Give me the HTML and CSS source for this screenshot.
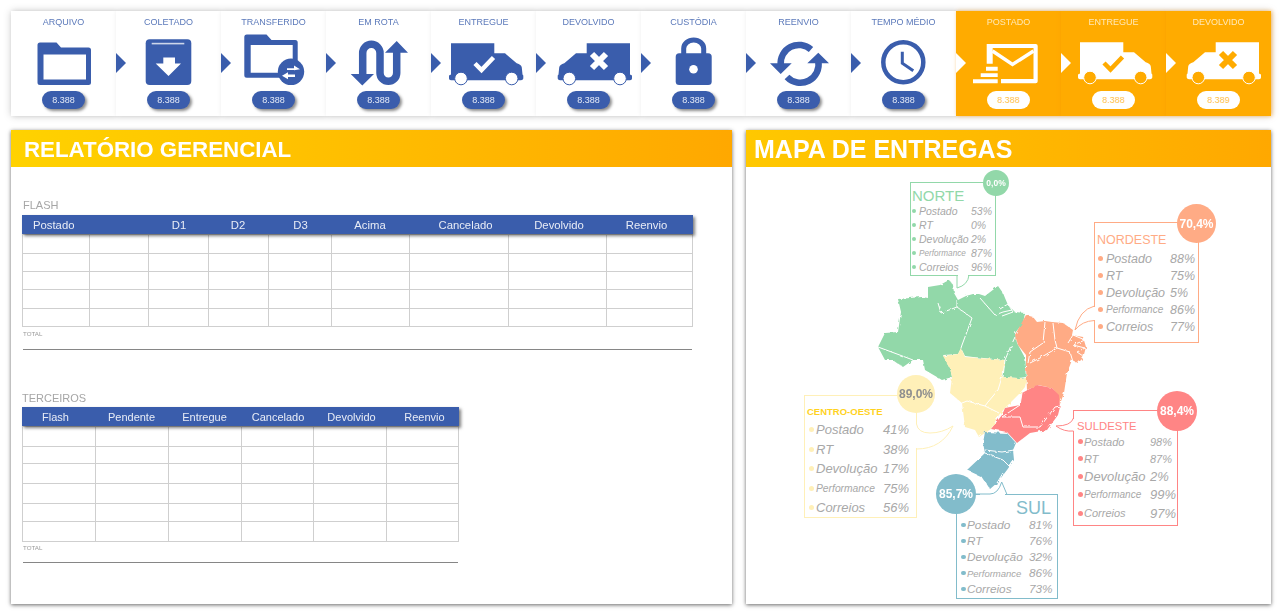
FILE: index.html
```html
<!DOCTYPE html>
<html lang="pt">
<head>
<meta charset="utf-8">
<title>Relatório Gerencial</title>
<link rel="stylesheet" href="styles.css">
</head>
<body>
<svg class="defs" width="0" height="0" aria-hidden="true">
  <symbol id="truck" viewBox="0 0 105 57">
    <path class="fg" d="M20 9.3H63.3V19.3H74L85.7 29.3Q90.3 30.6 90.8 33.5L91.5 40.5 92.3 41.5V44.5Q92 46.2 90 46.2H20Q18 46.2 18 44.5V41.5L20 40.5Z"/>
    <circle class="wheel" cx="30" cy="44.5" r="6.3"/>
    <circle class="wheel" cx="80.7" cy="44.5" r="6.3"/>
  </symbol>
  <filter id="rugged" x="-5%" y="-5%" width="110%" height="110%">
    <feTurbulence type="fractalNoise" baseFrequency=".22" numOctaves="2" seed="4" result="n"/>
    <feDisplacementMap in="SourceGraphic" in2="n" scale="3.2"/>
  </filter>
</svg>

<section class="strip">
  <div class="cell">
    <span class="cell-label">ARQUIVO</span>
    <svg class="icon" viewBox="0 0 105 57"><path class="fg" fill-rule="evenodd" d="M29 8.5H45.5L50 13.5H77.5A2.5 2.5 0 0 1 80 16V48.5A2.5 2.5 0 0 1 77.5 51H29A2.5 2.5 0 0 1 26.5 48.5V11A2.5 2.5 0 0 1 29 8.5ZM32.5 20.5V45.5H75V20.5Z"/></svg>
    <span class="pill">8.388</span>
  </div>
  <div class="cell arrowed">
    <span class="cell-label">COLETADO</span>
    <svg class="icon" viewBox="0 0 105 57"><rect class="fg" x="29.7" y="5.3" width="45.6" height="45.7" rx="4"/><rect class="bg soft" x="35.7" y="8.8" width="32.6" height="1.6"/><path class="bg" d="M47.3 23.5H59V29.5H65L52.5 42 39.7 29.5H47.3Z"/></svg>
    <span class="pill">8.388</span>
  </div>
  <div class="cell arrowed">
    <span class="cell-label">TRANSFERIDO</span>
    <svg class="icon" viewBox="0 0 105 57"><path class="fg" fill-rule="evenodd" d="M25.8 .5H45.5L50.5 6H74.2A2.5 2.5 0 0 1 76.7 8.5V41.2A2.5 2.5 0 0 1 74.2 43.7H25.8A2.5 2.5 0 0 1 23.3 41.2V3A2.5 2.5 0 0 1 25.8 .5ZM29.7 11V38.7H71.7V11Z"/><circle class="fg" cx="70" cy="37.8" r="13.2"/><path class="bg" d="M66 34.2H73V31.5L79 35.3 73 36.3V36H66ZM74 40.5H67V38.3L61 41.8 67 45.3V43H74Z"/></svg>
    <span class="pill">8.388</span>
  </div>
  <div class="cell arrowed">
    <span class="cell-label">EM ROTA</span>
    <svg class="icon" viewBox="0 0 105 57"><path class="line-fg thick" d="M36.7 42V19A8.65 8.65 0 0 1 54 19V39A8.35 8.35 0 0 0 70.7 39V17"/><path class="fg" d="M24.7 40H48L36.3 51.5ZM59 18.7H82L70.7 7Z"/></svg>
    <span class="pill">8.388</span>
  </div>
  <div class="cell arrowed">
    <span class="cell-label">ENTREGUE</span>
    <svg class="icon" viewBox="0 0 105 57"><use href="#truck"/><path class="line-bg mark" d="M44 29.5 50.5 36 62.5 23.5"/></svg>
    <span class="pill">8.388</span>
  </div>
  <div class="cell arrowed">
    <span class="cell-label">DEVOLVIDO</span>
    <svg class="icon" viewBox="0 0 105 57"><use href="#truck" transform="matrix(-1 0 0 1 114 0)"/><path class="line-bg cross" d="M56 20 70 34M70 20 56 34"/></svg>
    <span class="pill">8.388</span>
  </div>
  <div class="cell arrowed">
    <span class="cell-label">CUSTÓDIA</span>
    <svg class="icon" viewBox="0 0 105 57"><path class="line-fg shackle" d="M42.7 22V14.5A10 8.5 0 0 1 62.7 14.5V22"/><rect class="fg" x="34.7" y="19.3" width="36" height="31.7" rx="3.5"/><circle class="bg" cx="52.5" cy="35.3" r="4.3"/></svg>
    <span class="pill">8.388</span>
  </div>
  <div class="cell arrowed">
    <span class="cell-label">REENVIO</span>
    <svg class="icon" viewBox="0 0 105 57"><path class="line-fg arc" d="M65 15.5A18.3 18.3 0 0 0 34.7 31M41 43A18.3 18.3 0 0 0 72.3 27"/><path class="fg" d="M24 29.3H45.7L34.7 40ZM61.3 29.3H83L72.3 18.7Z"/></svg>
    <span class="pill">8.388</span>
  </div>
  <div class="cell arrowed">
    <span class="cell-label">TEMPO MÉDIO</span>
    <svg class="icon" viewBox="0 0 105 57"><circle class="line-fg ring" cx="52.3" cy="28.3" r="20"/><path class="line-fg hands" d="M51.3 17.7V29.3L62.3 36.7"/></svg>
    <span class="pill">8.388</span>
  </div>
  <div class="cell arrowed alt">
    <span class="cell-label">POSTADO</span>
    <svg class="icon" viewBox="0 0 105 57"><path class="fg" fill-rule="evenodd" d="M30.7 10H79.7A2 2 0 0 1 81.7 12V47.3A2 2 0 0 1 79.7 49.3H45V45H77.5V14H36.7V29.7H30.7Z"/><path class="line-fg flap" d="M36.5 17 56.5 30.5 77.5 17"/><path class="fg" d="M30 32.7H41.7V36.7H30ZM24.7 39.3H41.7V43H24.7ZM17 45.3H41.7V49.3H17Z"/></svg>
    <span class="pill">8.388</span>
  </div>
  <div class="cell arrowed alt">
    <span class="cell-label">ENTREGUE</span>
    <svg class="icon" viewBox="0 0 105 57"><use href="#truck" transform="translate(-1 -1)"/><path class="line-bg mark" d="M43 29 49.5 35.5 61.5 23"/></svg>
    <span class="pill">8.388</span>
  </div>
  <div class="cell arrowed alt">
    <span class="cell-label">DEVOLVIDO</span>
    <svg class="icon" viewBox="0 0 105 57"><use href="#truck" transform="matrix(-1 0 0 1 113 -1)"/><path class="line-bg cross" d="M55 19 69 33M69 19 55 33"/></svg>
    <span class="pill">8.389</span>
  </div>
</section>

<main class="panels">
  <section class="panel report">
    <h2 class="panel-title">RELATÓRIO GERENCIAL</h2>
    <div class="report-body">
      <div class="block block-flash">
        <h3 class="block-label">FLASH</h3>
        <div class="thead thead-flash">
          <span class="th th-first">Postado</span><span class="th"></span><span class="th th-r1">D1</span><span class="th">D2</span><span class="th th-r1">D3</span><span class="th">Acima</span><span class="th th-cancel">Cancelado</span><span class="th th-devol">Devolvido</span><span class="th th-reenv">Reenvio</span>
        </div>
        <table class="grid grid-flash">
          <colgroup><col class="f1"><col class="f2"><col class="f3"><col class="f3"><col class="f4"><col class="f5"><col class="f6"><col class="f7"><col class="f8"></colgroup>
          <tbody>
            <tr class="r19"><td></td><td></td><td></td><td></td><td></td><td></td><td></td><td></td><td></td></tr>
            <tr class="r18"><td></td><td></td><td></td><td></td><td></td><td></td><td></td><td></td><td></td></tr>
            <tr class="r18"><td></td><td></td><td></td><td></td><td></td><td></td><td></td><td></td><td></td></tr>
            <tr class="r19"><td></td><td></td><td></td><td></td><td></td><td></td><td></td><td></td><td></td></tr>
            <tr class="r18"><td></td><td></td><td></td><td></td><td></td><td></td><td></td><td></td><td></td></tr>
          </tbody>
        </table>
        <p class="total">TOTAL</p>
        <div class="total-line line-flash"></div>
      </div>
      <div class="block block-third">
        <h3 class="block-label">TERCEIROS</h3>
        <div class="thead thead-third">
          <span class="th th-flash">Flash</span><span class="th">Pendente</span><span class="th">Entregue</span><span class="th th-r1">Cancelado</span><span class="th th-r2">Devolvido</span><span class="th th-r2">Reenvio</span>
        </div>
        <table class="grid grid-third">
          <colgroup><col class="t1"><col class="t1"><col class="t1"><col class="t2"><col class="t1"><col class="t3"></colgroup>
          <tbody>
            <tr class="r20"><td></td><td></td><td></td><td></td><td></td><td></td></tr>
            <tr class="r17"><td></td><td></td><td></td><td></td><td></td><td></td></tr>
            <tr class="r20"><td></td><td></td><td></td><td></td><td></td><td></td></tr>
            <tr class="r20"><td></td><td></td><td></td><td></td><td></td><td></td></tr>
            <tr class="r18"><td></td><td></td><td></td><td></td><td></td><td></td></tr>
            <tr class="r20"><td></td><td></td><td></td><td></td><td></td><td></td></tr>
          </tbody>
        </table>
        <p class="total">TOTAL</p>
        <div class="total-line line-third"></div>
      </div>
    </div>
  </section>

  <section class="panel map-panel">
    <h2 class="panel-title">MAPA DE ENTREGAS</h2>
    <div class="map-canvas">
      <svg class="map-layer" viewBox="746 167 525 437" aria-hidden="true">
        <g class="region">
          <path class="r-green" d="M898 299 910 298 922 297 928 298 928 287 940 285 949 280 953 285 954 293 958 300 966 296 973 294 979 294 985 296 998 286 1003 293 1005 298 1008 305 1015 312 1025 313 1023 323 1015 333 1017 343 1024 356 1026 377 1018 378 1003 377 1005 360 973 357 965 356 961 348 958 354 943 355 933 352 923 360 925 370 942 380 952 377 950 368 943 355 933 352 923 360 913 360 903 367 893 360 885 360 878 347 885 333 898 332 901 312Z"/>
          <path class="r-orange" d="M1015 335 1026 315 1033 317 1037 322 1045 321 1052 322 1063 323 1073 330 1072 335 1083 337 1086 347 1083 358 1078 363 1072 360 1067 373 1064 393 1060 404 1058 395 1052 388 1038 385 1027 390 1026 367 1026 355 1018 345Z"/>
          <path class="r-cream" d="M943 356 958 354 961 348 965 357 1005 360 1003 377 1017 378 1027 378 1025 387 1020 393 1005 408 999 415 991 429 979 437 975 430 965 427 962 403 950 393 952 377 950 368Z"/>
          <path class="r-red" d="M1037 385 1052 388 1059 395 1060 407 1058 415 1047 430 1030 433 1017 443 1007 432 991 429 1002 415 1005 408 1020 405 1022 393Z"/>
          <path class="r-blue" d="M985 432 1007 433 1016 443 1013 450 1014 460 1007 470 997 483 990 489 982 477 967 470 985 453 983 443Z"/>
        </g>
        <g class="borders">
          <path d="M878 347 897 354 913 360"/>
          <path d="M938 303 941 313 957 307 972 318 962 345 961 348"/>
          <path d="M957 307 957 300"/>
          <path d="M980 298 995 315 1003 312 1012 310"/>
          <path d="M1000 309 1008 304 1013 312 1002 316"/>
          <path d="M1015 337 1010 348 1005 360 1003 377"/>
          <path d="M1053 323 1055 340 1057 348"/>
          <path d="M1045 322 1043 343 1030 352 1028 363"/>
          <path d="M1030 363 1040 358 1057 348 1070 352 1073 362 1070 369"/>
          <path d="M1068 343 1073 335 1085 340 1073 345 1085 348 1077 352 1083 356"/>
          <path d="M1002 377 998 390 988 402 985 406 967 401 962 403"/>
          <path d="M985 406 999 413"/>
          <path d="M1022 393 1020 405 1002 417 1020 417 1023 427 1040 427 1055 407 1060 406"/>
          <path d="M985 450 1002 452 1014 450"/>
          <path d="M985 453 1003 460 1013 470"/>
          <path d="M1003 473 997 483"/>
        </g>
      </svg>

      <div class="callout co-norte">
        <h4 class="co-title">NORTE</h4>
        <ul class="co-rows">
          <li class="row"><span class="lab">Postado</span><span class="val">53%</span></li>
          <li class="row"><span class="lab">RT</span><span class="val">0%</span></li>
          <li class="row"><span class="lab">Devolução</span><span class="val">2%</span></li>
          <li class="row"><span class="lab small">Performance</span><span class="val">87%</span></li>
          <li class="row"><span class="lab">Correios</span><span class="val">96%</span></li>
        </ul>
      </div>
      <div class="callout co-nordeste">
        <h4 class="co-title">NORDESTE</h4>
        <ul class="co-rows">
          <li class="row"><span class="lab">Postado</span><span class="val">88%</span></li>
          <li class="row"><span class="lab">RT</span><span class="val">75%</span></li>
          <li class="row"><span class="lab">Devolução</span><span class="val">5%</span></li>
          <li class="row"><span class="lab small">Performance</span><span class="val">86%</span></li>
          <li class="row"><span class="lab">Correios</span><span class="val">77%</span></li>
        </ul>
      </div>
      <div class="callout co-centro">
        <h4 class="co-title">CENTRO-OESTE</h4>
        <ul class="co-rows">
          <li class="row"><span class="lab">Postado</span><span class="val">41%</span></li>
          <li class="row"><span class="lab">RT</span><span class="val">38%</span></li>
          <li class="row"><span class="lab">Devolução</span><span class="val">17%</span></li>
          <li class="row"><span class="lab small">Performance</span><span class="val">75%</span></li>
          <li class="row"><span class="lab">Correios</span><span class="val">56%</span></li>
        </ul>
      </div>
      <div class="callout co-sudeste">
        <h4 class="co-title">SULDESTE</h4>
        <ul class="co-rows">
          <li class="row"><span class="lab">Postado</span><span class="val">98%</span></li>
          <li class="row"><span class="lab">RT</span><span class="val">87%</span></li>
          <li class="row big"><span class="lab">Devolução</span><span class="val">2%</span></li>
          <li class="row"><span class="lab small">Performance</span><span class="val big-val">99%</span></li>
          <li class="row"><span class="lab">Correios</span><span class="val big-val">97%</span></li>
        </ul>
      </div>
      <div class="callout co-sul">
        <h4 class="co-title">SUL</h4>
        <ul class="co-rows">
          <li class="row"><span class="lab">Postado</span><span class="val">81%</span></li>
          <li class="row"><span class="lab">RT</span><span class="val">76%</span></li>
          <li class="row"><span class="lab">Devolução</span><span class="val">32%</span></li>
          <li class="row"><span class="lab small">Performance</span><span class="val">86%</span></li>
          <li class="row"><span class="lab">Correios</span><span class="val">73%</span></li>
        </ul>
      </div>

      <svg class="map-layer" viewBox="746 167 525 437" aria-hidden="true">
        <g class="tail t-green"><path class="gap" d="M958 274H968V277H958Z"/><path d="M957 275V288Q968 285 969 275"/></g>
        <g class="tail t-orange"><path class="gap" d="M1093 307H1096V320H1093Z"/><path d="M1094.5 306Q1079 310 1075 330 1082 321 1094.5 320.5"/></g>
        <g class="tail t-cream"><path class="gap" d="M916 414H918V448H916Z"/><path d="M916.5 413V424Q918 433 930 433 942 433 953 426 942 449 916.5 449"/></g>
        <g class="tail t-red"><path class="gap" d="M1072 419H1075V431H1072Z"/><path d="M1073.5 418Q1071 426 1056 426 1064 432 1073.5 431"/></g>
        <g class="tail t-blue"><path class="gap" d="M980 493H1005V496H980Z"/><path d="M976 494H990Q998 494 1001.7 482L1007 494.5"/></g>
      </svg>

      <span class="badge b-norte">0,0%</span>
      <span class="badge b-nordeste">70,4%</span>
      <span class="badge b-centro">89,0%</span>
      <span class="badge b-sudeste">88,4%</span>
      <span class="badge b-sul">85,7%</span>
    </div>
  </section>
</main>
</body>
</html>
```

FILE: styles.css
```css
:root {
  --blue: #3a5dac;
  --amber: #ffab00;
  --font: "Liberation Sans", Arial, Helvetica, sans-serif;
}
* { box-sizing: border-box; }
html, body { height: 100%; }
body {
  margin: 0;
  padding: 11px 9px 0 11px;
  background: #fff;
  font-family: var(--font);
  overflow: hidden;
}
.defs { position: absolute; }

/* top strip */
.strip {
  display: flex;
  height: 105px;
  box-shadow: 0 0 8px rgba(0, 0, 0, .18);
  filter: blur(.35px);
}
.cell {
  --fg: var(--blue);
  --bg: #fff;
  position: relative;
  flex: 0 0 105px;
  display: flex;
  flex-direction: column;
  align-items: center;
  padding-top: 6px;
  background: #fff;
  box-shadow: 1px 0 5px rgba(0, 0, 0, .1);
}
.cell.alt {
  --fg: #fff;
  --bg: var(--amber);
  background: var(--amber);
  box-shadow: 1px 0 4px rgba(240, 140, 0, .55);
}
.arrowed::before {
  content: "";
  position: absolute;
  left: 0;
  top: 42px;
  border-left: 10px solid var(--fg);
  border-top: 10px solid transparent;
  border-bottom: 10px solid transparent;
}
.cell-label {
  height: 11px;
  line-height: 11px;
  font-size: 9px;
  color: #5b79ba;
  white-space: nowrap;
}
.alt .cell-label { color: #ffe9b8; }
.icon {
  display: block;
  width: 105px;
  height: 57px;
  margin-top: 6px;
}
.fg { fill: var(--fg); }
.bg { fill: var(--bg); }
.soft { opacity: .75; }
.wheel { fill: var(--bg); stroke: var(--fg); stroke-width: 1; }
.line-fg { fill: none; stroke: var(--fg); }
.line-bg { fill: none; stroke: var(--bg); }
.thick { stroke-width: 7.5; }
.mark { stroke-width: 4.5; }
.cross { stroke-width: 6; }
.shackle { stroke-width: 5; }
.arc { stroke-width: 6.5; }
.ring { stroke-width: 4.5; }
.hands { stroke-width: 3; }
.flap { stroke-width: 3.5; }
.pill {
  width: 43px;
  height: 18px;
  line-height: 18px;
  border-radius: 9px;
  text-align: center;
  font-size: 9px;
  color: #e6ebf7;
  background: var(--blue);
  box-shadow: 2px 2px 3px rgba(0, 0, 0, .45);
}
.alt .pill {
  color: #ffc24d;
  background: #fff;
  box-shadow: none;
}

/* panels */
.panels {
  display: flex;
  gap: 14px;
  margin-top: 14px;
  height: 474px;
  filter: blur(.35px);
}
.panel {
  background: #fff;
  box-shadow: 0 1px 4px rgba(0, 0, 0, .6);
}
.report { flex: 0 0 721px; }
.map-panel { flex: 0 0 525px; }
.panel-title {
  margin: 0;
  height: 37px;
  line-height: 39px;
  font-size: 22.3px;
  font-weight: 700;
  color: #fff;
  background: linear-gradient(90deg, #ffd200 0%, #ffa800 100%);
}
.report .panel-title { padding-left: 13px; }
.map-panel .panel-title {
  padding-left: 8px;
  font-size: 25px;
  line-height: 38px;
  background: linear-gradient(90deg, #ffc800 0%, #ffa800 100%);
}

.report-body { padding: 32px 0 0 11px; }
.block-label {
  margin: 0 0 3px 1px;
  height: 13px;
  line-height: 13px;
  font-size: 11px;
  font-weight: 400;
  color: #a6a6a6;
}
.block-third { margin-top: 42px; }
.block-third .block-label { margin: 0 0 2px; }
.thead {
  display: grid;
  height: 19px;
  align-items: center;
  background: var(--blue);
  box-shadow: 2px 2px 3px rgba(0, 0, 0, .5);
  position: relative;
}
.thead-flash {
  width: 671px;
  grid-template-columns: 67px 59px 60px 60px 63px 78px 99px 98px 87px;
}
.thead-flash .th { font-size: 11.3px; }
.thead-third {
  width: 437px;
  grid-template-columns: 73px 73px 73px 72px 73px 73px;
}
.th {
  text-align: center;
  font-size: 11px;
  color: #e8ecf6;
  white-space: nowrap;
}
.th-first { text-align: left; padding-left: 11px; }
.th-r1 { padding-left: 2px; }
.th-r2 { padding-left: 4px; }
.th-flash { padding-right: 6px; }
.th-cancel { padding-left: 14px; }
.th-devol { padding-left: 4px; }
.th-reenv { padding-right: 6px; }
.grid {
  border-collapse: collapse;
  table-layout: fixed;
}
.grid td { border: 1px solid #cfcfcf; padding: 0; }
.grid-flash { width: 670px; }
.grid-third { width: 436px; }
.f1 { width: 67px; } .f2 { width: 59px; } .f3 { width: 60px; } .f4 { width: 63px; }
.f5 { width: 78px; } .f6 { width: 99px; } .f7 { width: 98px; } .f8 { width: 86px; }
.t1 { width: 73px; } .t2 { width: 72px; } .t3 { width: 72px; }
.r17 { height: 17px; } .r18 { height: 18px; } .r19 { height: 19px; } .r20 { height: 20px; }
.total {
  margin: 3px 0 0 1px;
  height: 8px;
  line-height: 8px;
  font-size: 6.2px;
  color: #9a9a9a;
}
.total-line { height: 1px; margin: 11px 0 0 1px; background: #868686; }
.line-flash { width: 669px; }
.line-third { width: 435px; }
.block-third .total { margin-top: 2px; }
.block-third .total-line { margin-top: 10px; }

/* map */
.map-canvas { position: relative; height: 437px; }
.map-layer { position: absolute; left: 0; top: 0; width: 525px; height: 437px; pointer-events: none; }
.region, .borders { filter: url(#rugged); }
.r-green { fill: #92d8a9; }
.r-orange { fill: #ffab85; }
.r-cream { fill: #fff0b8; }
.r-red { fill: #ff8585; }
.r-blue { fill: #82bccb; }
.borders path { fill: none; stroke: #fff; stroke-width: 1; }
.tail path { fill: none; }
.tail .gap { fill: #fff; }
.t-green path:last-child { stroke: #92d8a9; }
.t-orange path:last-child { stroke: #ffab85; }
.t-cream path:last-child { stroke: #fff0b8; }
.t-red path:last-child { stroke: #ff8585; }
.t-blue path:last-child { stroke: #82bccb; }

.callout {
  position: absolute;
  background: #fff;
  border: 1px solid var(--c);
}
.co-title { margin: 0; font-weight: 400; color: var(--c); white-space: nowrap; }
.co-rows { margin: 0; padding: 0; list-style: none; }
.row {
  position: relative;
  display: flex;
  align-items: center;
  white-space: nowrap;
  font-style: italic;
  color: #a8a8a8;
}
.row::before {
  content: "";
  position: absolute;
  top: 50%;
  width: var(--dot);
  height: var(--dot);
  margin-top: calc(var(--dot) / -2);
  border-radius: 50%;
  background: var(--c);
}
.lab { display: block; width: var(--lab); flex: none; }
.small { font-size: var(--small); }

.co-norte {
  --c: #92d8a9; --dot: 4px; --lab: 52px; --small: 8.2px;
  left: 164px; top: 15px; width: 86px; height: 94px;
  padding-left: 8px; font-size: 10.5px;
}
.co-norte .co-title { margin: 4px 0 0 -7px; font-size: 15px; line-height: 17px; }
.co-norte .row { height: 14px; }
.co-norte .row::before { left: -7px; }

.co-nordeste {
  --c: #ffab85; --dot: 5px; --lab: 64px; --small: 10px;
  left: 348px; top: 55px; width: 105px; height: 121px;
  padding-left: 11px; font-size: 12.5px;
}
.co-nordeste .co-title { margin: 10px 0 0 -9px; font-size: 12.5px; line-height: 15px; }
.co-nordeste .co-rows { padding-top: 2px; }
.co-nordeste .row { height: 17px; }
.co-nordeste .row::before { left: -8px; }

.co-centro {
  --c: #fff0b8; --dot: 5px; --lab: 67px; --small: 10.3px;
  left: 58px; top: 228px; width: 113px; height: 123px;
  padding-left: 11px; font-size: 13px;
}
.co-centro .co-title { margin: 10px 0 0 -9px; font-size: 9.5px; line-height: 11px; font-weight: 700; color: #ffd21e; }
.co-centro .co-rows { padding-top: 3px; }
.co-centro .row { height: 19.5px; }
.co-centro .row::before { left: -7px; }

.co-sudeste {
  --c: #ff8585; --dot: 5px; --lab: 66px; --small: 10px;
  left: 327px; top: 243px; width: 105px; height: 116px;
  padding-left: 10px; font-size: 11px;
}
.co-sudeste .co-title { margin: 8px 0 0 -7px; font-size: 11.3px; line-height: 14px; }
.co-sudeste .row { height: 17px; }
.co-sudeste .row:nth-child(3) { height: 18px; }
.co-sudeste .row:nth-child(4) { height: 19px; }
.co-sudeste .row:nth-child(5) { height: 18px; }
.co-sudeste .row::before { left: -6px; }
.row.big { font-size: 13px; }
.big-val { font-size: 13px; }

.co-sul {
  --c: #82bccb; --dot: 4.5px; --lab: 62px; --small: 9.5px;
  left: 210px; top: 327px; width: 102px; height: 105px;
  padding-left: 10px; font-size: 11.8px;
}
.co-sul .co-title { margin: 3px 6px 0 0; text-align: right; font-size: 18px; line-height: 21px; }
.co-sul .co-rows { margin-top: -2px; }
.co-sul .row { height: 16px; }
.co-sul .row::before { left: -6px; }

.badge {
  position: absolute;
  display: flex;
  align-items: center;
  justify-content: center;
  border-radius: 50%;
  font-weight: 700;
  font-size: 12px;
  color: #fff;
}
.b-norte { left: 237px; top: 3px; width: 26px; height: 26px; font-size: 8.5px; background: #92d8a9; }
.b-nordeste { left: 431px; top: 37px; width: 39px; height: 39px; background: #ffab85; }
.b-centro { left: 151px; top: 208px; width: 38px; height: 38px; color: #8f8f8f; background: #fff0b8; }
.b-sudeste { left: 411px; top: 224px; width: 40px; height: 40px; background: #ff8585; }
.b-sul { left: 190px; top: 307px; width: 40px; height: 40px; background: #82bccb; }
```
